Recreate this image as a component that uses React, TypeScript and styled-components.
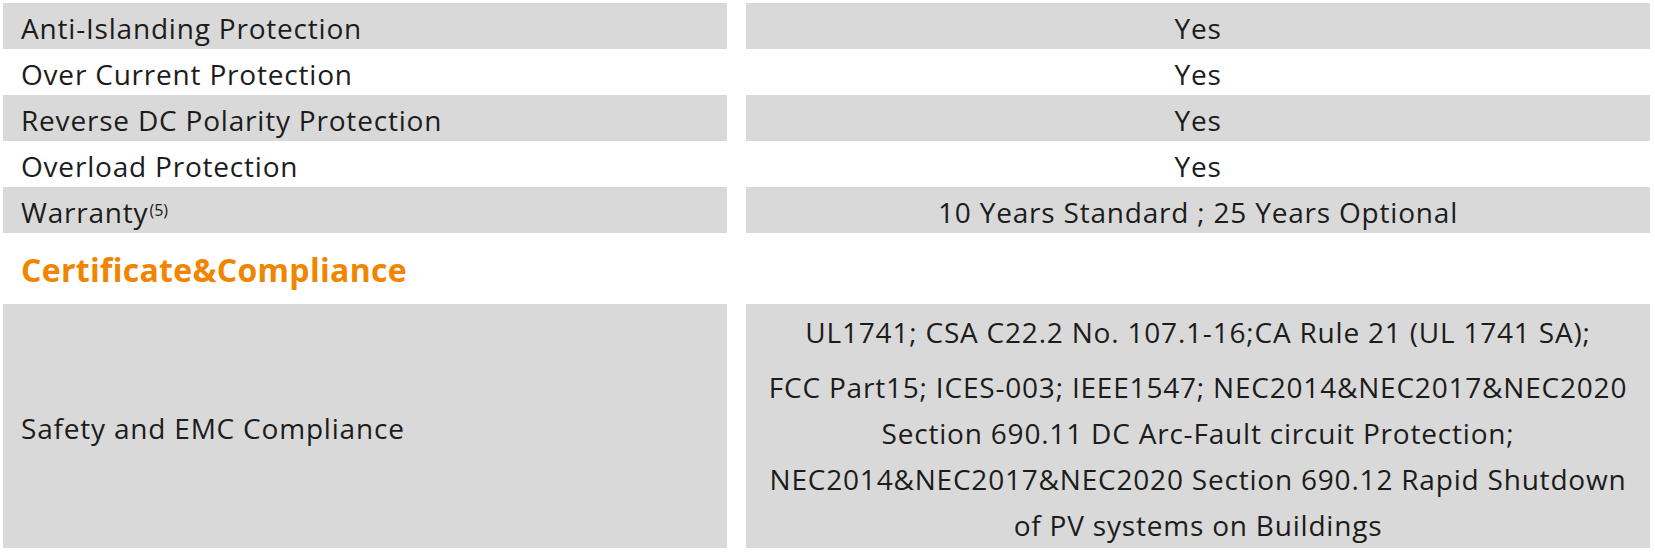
import React from 'react';
import styled, { createGlobalStyle } from 'styled-components';

const GlobalStyle = createGlobalStyle`
  html, body {
    margin: 0;
    padding: 0;
    background: #ffffff;
  }
  body {
    font-family: 'Open Sans', 'Liberation Sans', sans-serif;
    color: #1c1c1c;
  }
`;

const Table = styled.div`
  display: flex;
  flex-direction: column;
  width: 1655px;
  padding: 3px 5px 0 3px;
  box-sizing: border-box;
`;

const Row = styled.div`
  display: grid;
  grid-template-columns: 724px 904px;
  column-gap: 19px;
`;

const Cell = styled.div<{ $shaded?: boolean; $center?: boolean }>`
  display: flex;
  align-items: center;
  justify-content: ${(p) => (p.$center ? 'center' : 'flex-start')};
  text-align: ${(p) => (p.$center ? 'center' : 'left')};
  min-height: 46px;
  padding: 5px ${(p) => (p.$center ? '4px' : '18px')} 0;
  box-sizing: border-box;
  background: ${(p) => (p.$shaded ? '#d9d9d9' : 'transparent')};
  font-size: 28px;
  line-height: 1.2;
  font-weight: 400;
  letter-spacing: 0.8px;
`;

const Sup = styled.sup`
  font-size: 16px;
  line-height: 1;
  vertical-align: top;
  position: relative;
  top: -3px;
  margin-left: 1px;
  letter-spacing: 0;
`;

const SectionTitle = styled.h3`
  margin: 0;
  height: 71px;
  display: flex;
  align-items: center;
  padding: 2px 0 0 18px;
  box-sizing: border-box;
  font-size: 32px;
  font-weight: 700;
  letter-spacing: 0.3px;
  color: #f28500;
`;

const Lines = styled.div`
  display: flex;
  flex-direction: column;
  gap: 9px;
  padding-top: 0;
  line-height: 46px;
`;

const Line = styled.p`
  margin: 0;
`;

const rows: { label: React.ReactNode; value: string }[] = [
  { label: 'Anti-Islanding Protection', value: 'Yes' },
  { label: 'Over Current Protection', value: 'Yes' },
  { label: 'Reverse DC Polarity Protection', value: 'Yes' },
  { label: 'Overload Protection', value: 'Yes' },
  {
    label: (
      <>
        Warranty<Sup>(5)</Sup>
      </>
    ),
    value: '10 Years Standard ; 25 Years Optional',
  },
];

const App = () => {
  return (
    <>
      <GlobalStyle />
      <Table>
        {rows.map((r, i) => (
          <Row key={i}>
            <Cell $shaded={i % 2 === 0}>{r.label}</Cell>
            <Cell $shaded={i % 2 === 0} $center>
              {r.value}
            </Cell>
          </Row>
        ))}
        <SectionTitle>Certificate&amp;Compliance</SectionTitle>
        <Row>
          <Cell $shaded>Safety and EMC Compliance</Cell>
          <Cell $shaded $center>
            <Lines>
              <Line>UL1741; CSA C22.2 No. 107.1-16;CA Rule 21 (UL 1741 SA);</Line>
              <Line>
                FCC Part15; ICES-003; IEEE1547; NEC2014&amp;NEC2017&amp;NEC2020
                <br />
                Section 690.11 DC Arc-Fault circuit Protection;
                <br />
                NEC2014&amp;NEC2017&amp;NEC2020 Section 690.12 Rapid Shutdown
                <br />
                of PV systems on Buildings
              </Line>
            </Lines>
          </Cell>
        </Row>
      </Table>
    </>
  );
};

export default App;
